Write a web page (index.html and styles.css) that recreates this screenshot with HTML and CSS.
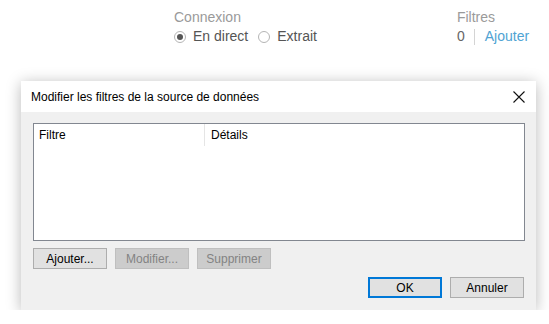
FILE: index.html
```html
<!DOCTYPE html>
<html>
<head>
  <title>Modifier les filtres</title>
  <link rel="stylesheet" href="styles.css">
</head>
<body>
  <div class="topbar">
    <div class="group connexion">
      <div class="group-title">Connexion</div>
      <div class="group-row">
        <span class="radio checked"></span><span class="radio-label">En direct</span>
        <span class="radio"></span><span class="radio-label">Extrait</span>
      </div>
    </div>
    <div class="group filtres">
      <div class="group-title">Filtres</div>
      <div class="group-row">
        <span class="count">0</span><span class="sep"></span><span class="link">Ajouter</span>
      </div>
    </div>
  </div>

  <div class="dialog">
    <div class="dialog-title">
      <span>Modifier les filtres de la source de données</span>
      <svg class="close" width="12" height="12" viewBox="0 0 12 12">
        <path d="M0.5 0.5 L11.5 11.5 M11.5 0.5 L0.5 11.5" stroke="#111" stroke-width="1.1" fill="none"/>
      </svg>
    </div>
    <div class="dialog-body">
      <div class="listbox">
        <div class="list-head">
          <div class="col col-filter">Filtre</div>
          <div class="col col-details">Détails</div>
        </div>
      </div>
      <div class="list-actions">
        <button class="btn">Ajouter...</button>
        <button class="btn" disabled>Modifier...</button>
        <button class="btn" disabled>Supprimer</button>
      </div>
      <div class="dialog-actions">
        <button class="btn btn-default">OK</button>
        <button class="btn">Annuler</button>
      </div>
    </div>
  </div>
</body>
</html>
```

FILE: styles.css
```css
body {
  margin: 0;
  background-color: #ffffff;
  font-family: 'Liberation Sans', Arial, sans-serif;
}
.topbar {
  display: flex;
  height: 81px;
  padding-left: 174px;
  box-sizing: border-box;
}
.group {
  padding-top: 9px;
}
.filtres {
  margin-left: 130px;
}
.group-title {
  font-size: 14px;
  color: #9a9a9a;
  line-height: 17px;
}
.group-row {
  display: flex;
  align-items: center;
  margin-top: 2px;
  font-size: 14px;
  line-height: 17px;
  color: #555555;
}
.radio {
  width: 10px;
  height: 10px;
  border: 1px solid #b5b5b5;
  border-radius: 50%;
  display: inline-flex;
  align-items: center;
  justify-content: center;
  margin-right: 7px;
}
.radio.checked::after {
  content: "";
  width: 6px;
  height: 6px;
  border-radius: 50%;
  background-color: #555555;
}
.radio-label {
  margin-right: 10px;
}
.count {
  color: #666666;
}
.sep {
  width: 1px;
  height: 16px;
  background-color: #d4d4d4;
  margin: 0 10px 0 9px;
}
.link {
  color: #4fa3d3;
}
.dialog {
  margin-left: 21px;
  width: 515px;
  height: 229px;
  background-color: #f0f0f0;
  box-shadow: 0 2px 14px rgba(0, 0, 0, 0.28);
  font-size: 12px;
  color: #000000;
}
.dialog-title {
  height: 31px;
  background-color: #ffffff;
  display: flex;
  align-items: center;
  justify-content: space-between;
  padding: 0 10px 0 10px;
  box-sizing: border-box;
}
.close {
  margin-right: 1px;
}
.dialog-body {
  padding: 11px 11px 0 12px;
}
.listbox {
  height: 116px;
  background-color: #ffffff;
  border: 1px solid #828790;
}
.list-head {
  display: flex;
  height: 22px;
  align-items: center;
}
.col {
  padding-left: 5px;
  height: 22px;
  line-height: 22px;
}
.col-filter {
  width: 165px;
  border-right: 1px solid #e5e5e5;
}
.col-details {
  padding-left: 6px;
}
.list-actions {
  display: flex;
  gap: 8px;
  margin-top: 7px;
}
.btn {
  width: 74px;
  height: 21px;
  padding: 0;
  font-family: inherit;
  font-size: 12px;
  color: #000000;
  background-color: #e1e1e1;
  border: 1px solid #adadad;
}
.btn:disabled {
  background-color: #cccccc;
  border-color: #bfbfbf;
  color: #838383;
}
.dialog-actions {
  display: flex;
  justify-content: flex-end;
  gap: 8px;
  margin-top: 8px;
  padding-right: 1px;
}
.btn-default {
  border: 2px solid #0078d7;
}
```
